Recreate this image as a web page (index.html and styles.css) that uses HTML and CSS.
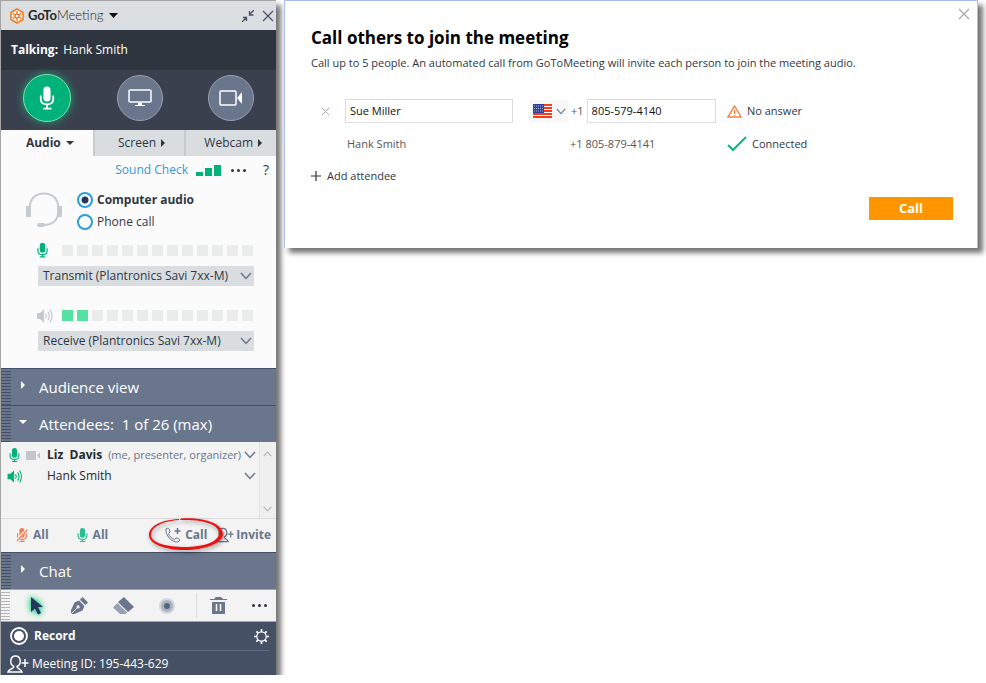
FILE: index.html
```html
<!DOCTYPE html>
<html lang="en">
<head>
  <meta charset="UTF-8" />
  <meta name="viewport" content="width=device-width, initial-scale=1.0"/>
  <title>GoToMeeting</title>
  <link rel="stylesheet" href="styles.css">
</head>
<body>

  <!-- Shared icons -->
  <svg class="sprite" aria-hidden="true">
    <symbol id="chevron" viewBox="0 0 12 8"><path d="M1 1l5 5.500 5-5.500" fill="none" stroke="currentColor" stroke-width="1.500"/></symbol>
    <symbol id="mic" viewBox="0 0 12 16">
      <rect x="3" y="0" width="6" height="11" rx="3" fill="currentColor"/>
      <path d="M1 6v3c0 3 2 4 5 4s5-1 5-4V6M6 13v2M3 15.500h6" fill="none" stroke="currentColor" stroke-width="1.300"/>
    </symbol>
    <symbol id="speaker" viewBox="0 0 16 14">
      <path d="M0 4h3l4-3.500v13L3 10H0z" fill="currentColor"/>
      <path d="M8.500 4.500q1.500 2.500 0 5M10.800 2.500q3 4.500 0 9M13 .5q4 6.500 0 13" fill="none" stroke="currentColor" stroke-width="1.200"/>
    </symbol>
    <symbol id="close" viewBox="0 0 12 12"><path d="M1 1l10 10M11 1L1 11" fill="none" stroke="currentColor" stroke-width="1.300"/></symbol>
    <symbol id="person" viewBox="0 0 22 18">
      <path d="M7 11.500C2 9 3 1 8.500 1s6.500 8 1.500 10.500c0 2.500 4 2 5 5.500H1c1-3.500 6-3 6-5.500M18 4v8M14.500 8h7" fill="none" stroke="currentColor" stroke-width="1.500"/>
    </symbol>
  </svg>

  <!-- Control panel -->
  <aside class="panel">
    <header class="titlebar">
      <svg class="logo" width="16" height="16" viewBox="0 0 16 16" aria-hidden="true">
        <path d="M8 1l6 3.500v7L8 15l-6-3.500v-7z" fill="#fff" stroke="#f07820" stroke-width="1.500" stroke-linejoin="round"/>
        <path d="M8 3v10M3.700 5.500l8.600 5M3.700 10.500l8.600-5" stroke="#f58220" stroke-width="1.500"/>
        <circle cx="8" cy="8" r="2" fill="#fff" stroke="#e0592a"/>
      </svg>
      <h1 class="brand"><b>GoTo</b>Meeting</h1>
      <svg class="brand-arrow" width="9" height="5" viewBox="0 0 9 5" aria-hidden="true"><path d="M0 0h9L4.500 5z"/></svg>
      <button class="icon-btn shrink" aria-label="Minimize">
        <svg width="12" height="12" viewBox="0 0 12 12"><path d="M12 0L8 4M7.500 1v4h4M0 12l4-4M1 7.500h3.500V11" fill="none" stroke="currentColor" stroke-width="1.300"/></svg>
      </button>
      <button class="icon-btn" aria-label="Close"><svg width="12" height="12"><use href="#close"/></svg></button>
    </header>

    <p class="talking"><b>Talking:</b> Hank Smith</p>

    <div class="controls">
      <button class="round on" aria-label="Mute">
        <svg width="16" height="25" viewBox="0 0 18 27">
          <rect x="5" y="0" width="8" height="17" rx="4" fill="#fff"/>
          <path d="M2 10v4c0 4 3 6 7 6s7-2 7-6v-4M9 20v5M5 25h9" fill="none" stroke="#fff" stroke-width="2"/>
        </svg>
      </button>
      <button class="round" aria-label="Share screen">
        <svg width="24" height="18" viewBox="0 0 24 18">
          <rect x="1" y="1" width="22" height="12" rx="1" fill="none" stroke="#fff" stroke-width="1.500"/>
          <path d="M10 14h4v2h3v1H7v-1h3z" fill="#fff"/>
        </svg>
      </button>
      <button class="round" aria-label="Share webcam">
        <svg width="24" height="16" viewBox="0 0 24 16">
          <rect x="1" y="1" width="16" height="14" rx="1" fill="none" stroke="#fff" stroke-width="1.500"/>
          <path d="M18 8l5-6v12z" fill="#fff"/>
        </svg>
      </button>
    </div>

    <nav class="tabs">
      <button class="tab active">Audio <i class="down"></i></button>
      <button class="tab">Screen <i class="right"></i></button>
      <button class="tab">Webcam <i class="right"></i></button>
    </nav>

    <section class="audio">
      <div class="audio-top">
        <a href="#">Sound Check</a>
        <svg class="bars" width="25" height="11" viewBox="0 0 25 11" aria-hidden="true"><path d="M0 7h7v4H0zM9 3h7v8H9zM18 0h7v11h-7z" fill="#00b27a"/></svg>
        <button class="icon-btn more" aria-label="More"><span class="dots"></span></button>
        <button class="icon-btn help">?</button>
      </div>

      <div class="source">
        <svg class="headset" width="36" height="36" viewBox="0 0 36 36" aria-hidden="true">
          <path d="M4 15C3-3 33-3 32 15M32 23c-2 8-8 10-15 10" fill="none" stroke="#c6cbd0" stroke-width="2"/>
          <path d="M0 14h5v11H0zM31 14h5v11h-5z" fill="#c6cbd0"/>
          <rect x="11" y="31" width="8" height="4" rx="2" fill="#c6cbd0"/>
        </svg>
        <div class="radios">
          <label><input type="radio" name="source" checked><b>Computer audio</b></label>
          <label><input type="radio" name="source">Phone call</label>
        </div>
      </div>

      <div class="device">
        <svg class="green" width="11" height="16"><use href="#mic"/></svg>
        <div class="level"><i></i><i></i><i></i><i></i><i></i><i></i><i></i><i></i><i></i><i></i><i></i><i></i><i></i></div>
        <div class="select">
          <select aria-label="Microphone"><option>Transmit (Plantronics Savi 7xx-M)</option></select>
          <svg width="12" height="8"><use href="#chevron"/></svg>
        </div>
      </div>

      <div class="device">
        <svg class="muted" width="16" height="14"><use href="#speaker"/></svg>
        <div class="level"><i class="lit"></i><i class="lit"></i><i></i><i></i><i></i><i></i><i></i><i></i><i></i><i></i><i></i><i></i><i></i></div>
        <div class="select">
          <select aria-label="Speakers"><option>Receive (Plantronics Savi 7xx-M)</option></select>
          <svg width="12" height="8"><use href="#chevron"/></svg>
        </div>
      </div>
    </section>

    <button class="bar"><i class="right"></i>Audience view</button>
    <button class="bar"><i class="down"></i>Attendees:&nbsp; 1 of 26 (max)</button>

    <section class="attendees">
      <ul class="people">
        <li>
          <span class="state">
            <svg class="green" width="11" height="14"><use href="#mic"/></svg>
            <svg width="14" height="9" viewBox="0 0 14 9"><path d="M0 0h10v9H0zM14 1v7l-3-3.500z" fill="#c3c7cc"/></svg>
          </span>
          <b>Liz&nbsp; Davis</b><span class="role">(me, presenter, organizer)</span>
          <svg class="open" width="12" height="8"><use href="#chevron"/></svg>
        </li>
        <li>
          <span class="state"><svg class="green" width="16" height="13"><use href="#speaker"/></svg></span>
          Hank Smith
          <svg class="open" width="12" height="8"><use href="#chevron"/></svg>
        </li>
      </ul>
      <div class="scroll">
        <svg class="up" width="9" height="6"><use href="#chevron"/></svg>
        <svg width="9" height="6"><use href="#chevron"/></svg>
      </div>
    </section>

    <div class="actions">
      <button>
        <svg class="orange" width="12" height="14" viewBox="0 0 12 16"><use href="#mic" width="12" height="16"/><path d="M0 14L12 1" stroke="#f3f3f3" stroke-width="3"/><path d="M0 15L12 2" stroke="currentColor" stroke-width="1.300"/></svg>All
      </button>
      <button><svg class="mint" width="11" height="14"><use href="#mic"/></svg>All</button>
      <button class="call">
        <svg width="16" height="16" viewBox="0 0 16 16"><path d="M1 2l2-1c1 0 2 3 2 4L3.500 6.500c1 3 3 5 6 6L11 11c1 0 4 1 4 2l-2 2C7 16 0 8 1 2z" fill="none" stroke="currentColor"/><path d="M12.500 1v6M9.500 4h6" fill="none" stroke="currentColor" stroke-width="1.500"/></svg>Call
        <svg class="mark" width="76" height="34" viewBox="0 0 76 34" aria-hidden="true">
          <path fill-rule="evenodd" d="M30 2C10 3 0 10 0 18c0 9 16 15 36 15s38-7 38-16S58 0 32 1.500L31 3c25-1 39 5 39 13 0 9-16 14-34 14S2 26 2 18C2 11 12 4 30 3z" fill="#ee1010"/>
        </svg>
      </button>
      <button class="invite"><svg width="18" height="16"><use href="#person"/></svg>Invite</button>
    </div>

    <button class="bar"><i class="right"></i>Chat</button>

    <!-- Drawing tools -->
    <div class="tools">
      <button class="icon-btn" aria-label="Pointer"><svg class="pointer" width="16" height="20" viewBox="0 0 16 20"><path d="M2 1l12 10H9l3 6-3 1.500-3-6L2 16z" fill="#24355e"/></svg></button>
      <button class="icon-btn" aria-label="Pen">
        <svg width="18" height="18" viewBox="0 0 20 20"><path d="M14 0l6 6-3 3-6-6zM10 4l6 6-2 5-9 4H1v-4L5 6z" fill="#69768c"/><path d="M1 19l7-7" stroke="#f3f3f3"/><circle cx="9" cy="11" r="1.800" fill="#f3f3f3"/></svg>
      </button>
      <button class="icon-btn" aria-label="Highlighter">
        <svg width="21" height="17" viewBox="0 0 21 17"><path d="M11 0l10 10-6 5L5 5z" fill="#69768c"/><path d="M4.500 6l9.500 9.500-1.500 1.500H7L0 10.500z" fill="#98a1b1"/></svg>
      </button>
      <button class="icon-btn" aria-label="Spotlight">
        <svg width="16" height="16" viewBox="0 0 16 16"><circle cx="8" cy="8" r="8" fill="#d3d7de"/><circle cx="8" cy="8" r="6" fill="#aab2c0"/><circle cx="8" cy="8" r="3" fill="#566580"/></svg>
      </button>
      <button class="icon-btn trash" aria-label="Clear drawings">
        <svg width="17" height="17" viewBox="0 0 17 17"><path d="M4 2l2-2h5l2 2h4v1H0V2zM2 5h13v12H2z" fill="#69768c"/><path d="M6.500 7v7M10.500 7v7" stroke="#fff" stroke-width="1.500"/></svg>
      </button>
      <button class="icon-btn" aria-label="More tools"><span class="dots"></span></button>
    </div>

    <footer class="bottom">
      <div class="record">
        <button class="icon-btn"><svg width="18" height="18" viewBox="0 0 18 18"><circle cx="9" cy="9" r="8" fill="none" stroke="#fff" stroke-width="1.800"/><circle cx="9" cy="9" r="5" fill="#fff"/></svg><b>Record</b></button>
        <button class="icon-btn gear" aria-label="Settings">
          <svg width="15" height="15" viewBox="0 0 16 16"><circle cx="8" cy="8" r="5" fill="none" stroke="#fff" stroke-width="1.300"/><path d="M8 0v3M8 13v3M0 8h3M13 8h3M2.500 2.500l2 2M11.500 11.500l2 2M2.500 13.500l2-2M11.500 4.500l2-2" stroke="#fff" stroke-width="1.800"/></svg>
        </button>
      </div>
      <div class="meeting"><svg width="22" height="18"><use href="#person"/></svg>Meeting ID: 195-443-629</div>
    </footer>
  </aside>

  <!-- Call others dialog -->
  <main class="dialog">
    <button class="icon-btn dismiss" aria-label="Close dialog"><svg width="12" height="12"><use href="#close"/></svg></button>
    <h2>Call others to join the meeting</h2>
    <p class="intro">Call up to 5 people. An automated call from GoToMeeting will invite each person to join the meeting audio.</p>

    <div class="row">
      <button class="icon-btn remove" aria-label="Remove"><svg width="9" height="9"><use href="#close"/></svg></button>
      <input class="name" type="text" aria-label="Name" value="Sue Miller">
      <div class="phone">
        <div class="country">
          <svg class="flag" width="19" height="14" viewBox="0 0 19 14" aria-hidden="true">
            <path d="M0 0h19v14H0z" fill="#fff"/>
            <path d="M0 0h19v2H0zM0 3h19v2H0zM0 6h19v2H0zM0 9h19v2H0zM0 12h19v2H0z" fill="#fb3b1e"/>
            <path d="M0 0h11v9H0z" fill="#2c3f9e"/>
            <path d="M1 2h9M1 4.500h9M1 7h9" stroke="#a9b2dc" stroke-dasharray="1 1"/>
          </svg>
          <svg width="10" height="7" class="arrow"><use href="#chevron"/></svg>
          <select aria-label="Country"><option value="US" aria-label="United States"></option></select>
        </div>
        <label for="phone">+1</label>
        <input id="phone" type="tel" value="805-579-4140">
      </div>
      <span class="status">
        <svg width="15" height="13" viewBox="0 0 15 13"><path d="M7.500 1L14 12H1zM7.500 5v4M7.500 10v1" fill="none" stroke="#f9803f" stroke-width="1.400"/></svg>No answer
      </span>
    </div>

    <div class="row done">
      <span class="name">Hank Smith</span>
      <span class="phone">+1 805-879-4141</span>
      <span class="status">
        <svg width="20" height="16" viewBox="0 0 20 16"><path d="M1 9l5 5L19 1" fill="none" stroke="#0fb67f" stroke-width="2"/></svg>Connected
      </span>
    </div>

    <button class="icon-btn add"><svg width="10" height="10" viewBox="0 0 10 10"><path d="M5 0v10M0 5h10" stroke="#333" stroke-width="1.200"/></svg>Add attendee</button>
    <button class="submit">Call</button>
  </main>

</body>
</html>
```
FILE: styles.css
```css
* {
  margin: 0;
  padding: 0;
  box-sizing: border-box;
}

body {
  display: flex;
  align-items: flex-start;
  gap: 8px;
  background: #fff;
  color: #2f3742;
  font: 12px/16px "Open Sans", "Noto Sans", sans-serif;
}

button,
input,
select {
  border: 0;
  background: none;
  color: inherit;
  font: inherit;
}

svg {
  display: block;
  flex: none;
}

b {
  font-weight: 700;
}

.sprite {
  display: none;
}

.icon-btn {
  display: flex;
  align-items: center;
}

.green {
  color: #00b27a;
}

.mint {
  color: #2bbd92;
}

.orange {
  color: #f47a50;
}

.muted {
  color: #c3c8ce;
}

/* small triangles */
.down,
.right {
  flex: none;
  border: 4px solid transparent;
}

.down {
  border-top-color: currentColor;
  border-bottom: 0;
}

.right {
  border-left-color: currentColor;
  border-right: 0;
}

.dots {
  width: 3px;
  height: 3px;
  margin: 0 6px;
  border-radius: 50%;
  background: #2f3742;
  box-shadow: -6px 0 #2f3742, 6px 0 #2f3742;
}

/* Panel */
.panel {
  flex: none;
  width: 276px;
  border-left: 1px solid #a5a5a5;
  box-shadow: 5px 5px 5px #777;
}

.titlebar {
  display: flex;
  align-items: center;
  padding: 5px 2px 5px 8px;
  border-top: 1px solid #a5a5a5;
  background: #dbdee0;
  color: #46536b;
}

.brand {
  margin: 0 6px 0 3px;
  color: #26282b;
  font: 300 13px/19px Lato, sans-serif;
}

.brand-arrow {
  fill: #111;
}

.shrink {
  margin-left: auto;
  margin-right: 8px;
}

.talking {
  padding: 12px 10px;
  background: #2f353f;
  color: #fff;
}

.talking b {
  margin-right: 2px;
}

.controls {
  display: flex;
  justify-content: space-between;
  align-items: center;
  padding: 4px 22px 8px;
  background: #3a404e;
}

.round {
  display: flex;
  align-items: center;
  justify-content: center;
  width: 46px;
  height: 46px;
  border: 1px solid #98a1b1;
  border-radius: 50%;
  background: #69768c;
}

.round.on {
  width: 48px;
  height: 48px;
  border-color: #7fe0a4;
  background: #00b27a;
  box-shadow: 0 0 8px #1ca477;
}

.tabs {
  display: flex;
  background: #fbfbfb;
}

.tab {
  display: flex;
  flex: 1;
  align-items: center;
  justify-content: center;
  gap: 5px;
  padding: 5px 0 5px 4px;
  border-left: 2px solid #c6cbd0;
  background: #dadde0;
}

.tab.active {
  border-color: #fbfbfb;
  background: #fbfbfb;
  font-weight: 700;
}

.audio {
  padding: 6px 7px 17px 25px;
  background: #fbfbfb;
}

.audio-top {
  display: flex;
  align-items: center;
  justify-content: flex-end;
}

.audio-top a {
  color: #2f9ad6;
  text-decoration: none;
}

.bars {
  margin: 0 10px 0 8px;
}

.help {
  margin-left: 17px;
  font-size: 14px;
}

.source {
  display: flex;
  gap: 15px;
  padding: 14px 0 12px;
}

.radios {
  display: grid;
  gap: 6px;
}

.radios label {
  display: flex;
  align-items: center;
  gap: 4px;
}

.radios input {
  width: 16px;
  height: 16px;
  border: 2px solid #2a9fd6;
  border-radius: 50%;
  background: #fff;
  appearance: none;
}

.radios input:checked {
  background: radial-gradient(#24355e 3px, #fff 4px);
}

.device {
  display: grid;
  grid-template-columns: 16px 1fr;
  align-items: center;
  gap: 8px 9px;
  padding: 0 15px 0 11px;
}

.device + .device {
  margin-top: 22px;
}

.level {
  display: flex;
  gap: 4px;
  margin: 2px 0;
}

.level i {
  width: 11px;
  height: 11px;
  background: #e9ecea;
}

.level .lit {
  background: #55e2a0;
}

.select {
  display: flex;
  grid-column: 1 / 3;
  align-items: center;
  margin-left: 1px;
  padding-right: 2px;
  background: #d9dde0;
  color: #69768c;
}

.select select {
  flex: 1;
  min-width: 0;
  padding: 2px 5px;
  color: #2f3742;
  appearance: none;
}

/* Collapsible headings, with a grip on the left */
.bar {
  display: flex;
  align-items: center;
  width: 100%;
  padding: 7px 0 7px 18px;
  border-top: 1px solid #455066;
  background:
    repeating-linear-gradient(#69768c 0 2px, #455066 2px 3px) left / 10px 100% no-repeat,
    #69768c;
  color: #fff;
  font-size: 15px;
  line-height: 22px;
}

.bar i {
  margin-bottom: 4px;
}

.bar .right {
  margin-left: 2px;
  margin-right: 14px;
}

.bar .down {
  margin-right: 12px;
}

.attendees {
  display: flex;
  padding-left: 6px;
  background: #f3f3f3;
}

.people {
  flex: 1;
  padding: 2px 3px 32px 0;
  list-style: none;
}

.people li {
  display: flex;
  align-items: center;
  padding: 3px 0 2px;
  color: #24292f;
  white-space: nowrap;
}

.state {
  display: flex;
  flex: none;
  align-items: center;
  gap: 6px;
  width: 40px;
}

.state svg:first-child:not(:last-child) {
  margin-left: 2px;
}

.role {
  margin-left: 6px;
  color: #69768c;
  font-size: 11px;
}

.open {
  margin-left: auto;
  color: #69768c;
}

.scroll {
  display: flex;
  flex-direction: column;
  justify-content: space-between;
  padding: 9px 4px 6px 3px;
  border-left: 1px solid #e2e2e2;
  background: #efefef;
  color: #b5b5b5;
}

.up {
  transform: rotate(180deg);
}

.actions {
  display: flex;
  padding: 8px 5px 9px 15px;
  border-top: 1px solid #dcdcdc;
  background: #f3f3f3;
  color: #69768c;
}

.actions button {
  display: flex;
  align-items: center;
  gap: 5px;
  margin-right: 28px;
  font-weight: 700;
}

.actions .call {
  position: relative;
  gap: 4px;
  margin-left: auto;
  margin-right: 9px;
}

.actions .invite {
  margin: 0;
  gap: 2px;
}

/* red marker round the Call button */
.mark {
  position: absolute;
  top: -10px;
  left: -16px;
  z-index: 1;
  filter: drop-shadow(1px 2px 2px #0006);
}

.tools {
  display: flex;
  align-items: center;
  gap: 17px;
  padding: 3px 5px 3px 24px;
  border-top: 1px solid #a5a5a5;
  border-bottom: 1px solid #a5a5a5;
  background:
    repeating-linear-gradient(#f3f3f3 0 2px, #b4b4b4 2px 3px) left / 9px 100% no-repeat,
    #f3f3f3;
}

.tools button {
  padding: 0 4px;
}

.tools button:last-child {
  margin-left: auto;
}

.tools .trash {
  padding: 4px 0 4px 13px;
  border-left: 1px solid #dcdcdc;
}

.pointer {
  filter: drop-shadow(0 0 3px #36d68f) drop-shadow(0 0 1px #36d68f);
}

.bottom {
  padding: 0 7px 2px 6px;
  background: #465064;
  color: #fff;
}

.record {
  display: flex;
  align-items: center;
  justify-content: space-between;
  margin-left: 3px;
  padding: 5px 0;
  border-bottom: 1px solid #596b80;
}

.record .icon-btn {
  gap: 6px;
}

.meeting {
  display: flex;
  align-items: center;
  gap: 3px;
  padding-top: 4px;
}

/* Dialog */
.dialog {
  position: relative;
  flex: 1;
  margin-right: 8px;
  padding: 26px 24px 28px 26px;
  border: 1px solid #a9bdec;
  border-bottom: 0;
  background: #fff;
  box-shadow: 5px 5px 5px #777;
  font-size: 11px;
}

.dismiss {
  position: absolute;
  top: 7px;
  right: 7px;
  color: #aaa;
}

.dialog h2 {
  color: #000;
  font-size: 17px;
  line-height: 22px;
}

.intro {
  margin: 6px 0 28px;
}

.row {
  display: grid;
  grid-template-columns: 34px 168px 203px 1fr;
  align-items: center;
}

.row input {
  min-width: 0;
  padding: 3px 4px;
  border: 1px solid #dcdcdc;
  color: #111;
}

.remove {
  padding-left: 10px;
  color: #aaa;
}

.phone {
  display: flex;
  align-items: center;
  gap: 3px;
  margin-left: 16px;
  color: #555;
}

.phone input {
  flex: 1;
}

.country {
  display: flex;
  position: relative;
  align-items: center;
  gap: 4px;
  padding: 4px 2px 4px 4px;
  background: #f7f7f7;
  color: #7b8494;
}

/* the list lies over the flag and its arrow */
.country select {
  position: absolute;
  inset: 0;
  appearance: none;
}

.status {
  display: flex;
  align-items: center;
  gap: 5px;
  margin-left: 11px;
}

.done {
  margin-top: 13px;
}

.done .name {
  grid-column: 2;
  padding-left: 2px;
  color: #555;
}

.done .phone {
  padding-left: 41px;
}

.add {
  gap: 6px;
  margin: 16px 0 13px;
}

.submit {
  display: block;
  margin-left: auto;
  padding: 3px 30px 4px;
  background: #ff9600;
  color: #fff;
  font-size: 13px;
  font-weight: 700;
}
```
